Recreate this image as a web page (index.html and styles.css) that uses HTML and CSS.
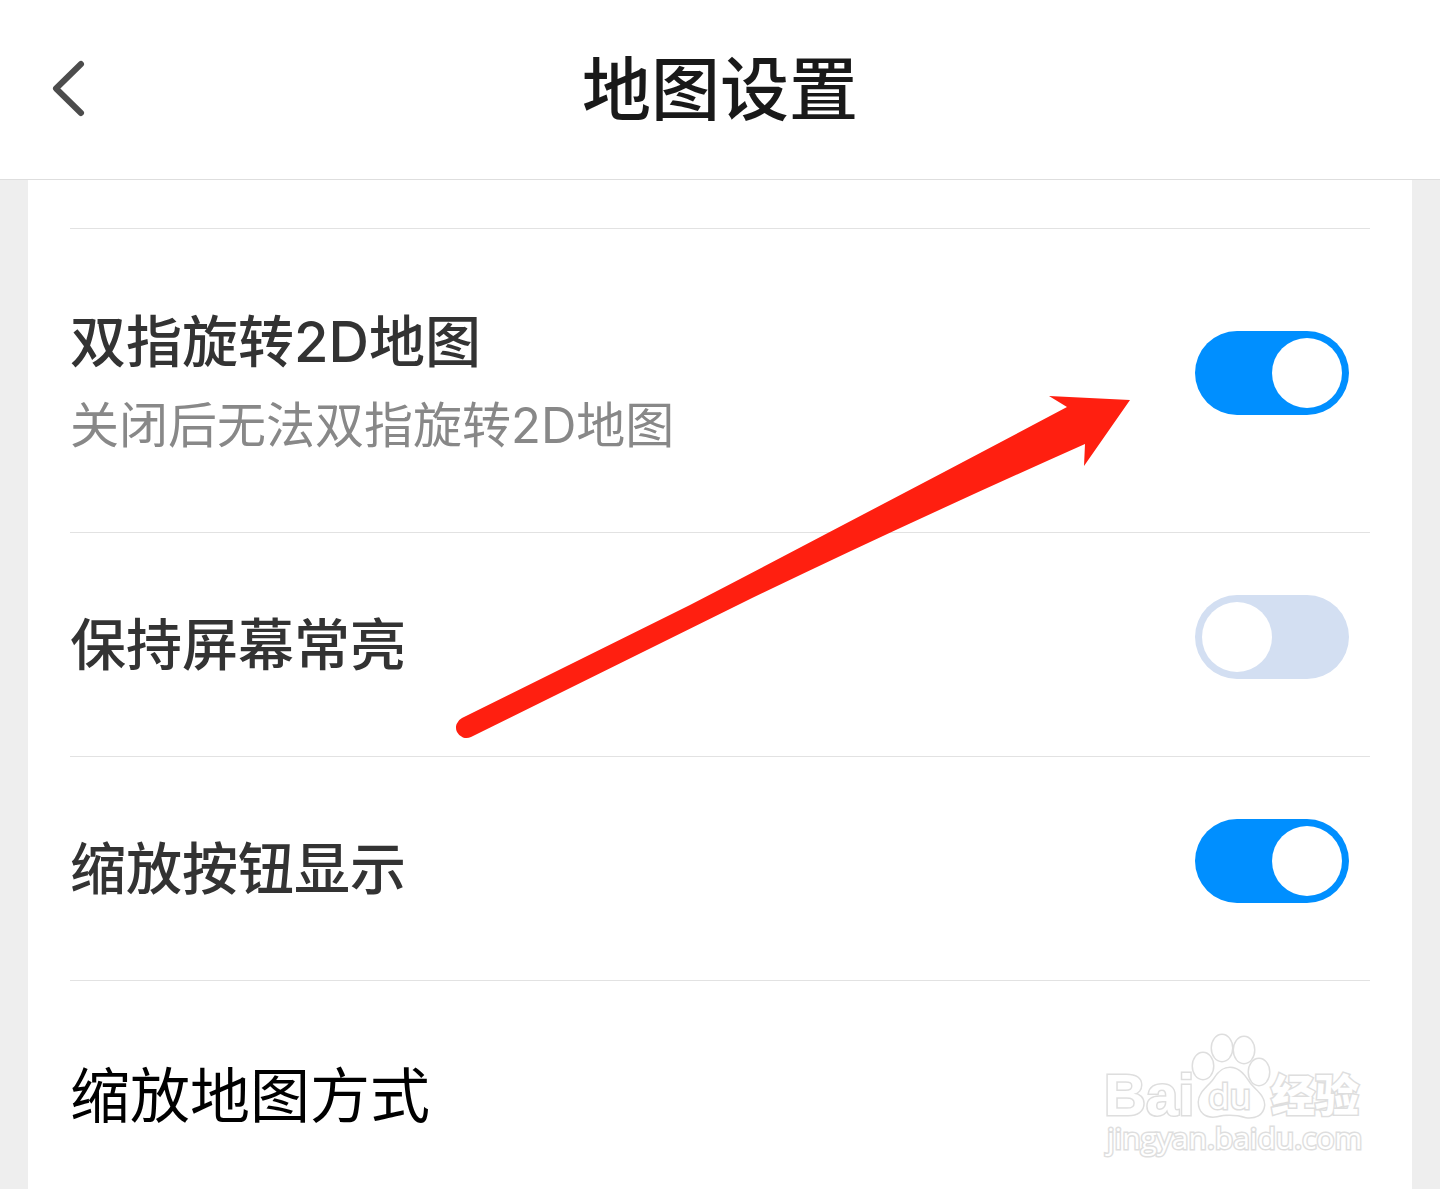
FILE: index.html
```html
<!DOCTYPE html>
<html lang="zh-CN">
    <head>
        <title>地图设置</title>
        <meta charset="UTF-8">
        <meta name="viewport" content="width=device-width,initial-scale=1.0">
        <link rel="stylesheet" href="styles.css">
    </head>
    <body>
        <div id="header">
            <button type="button" class="back" aria-label="返回">
                <svg width="40" height="64" viewBox="0 0 40 64">
                    <path d="M33 6L8 30.500L33 55" />
                </svg>
            </button>
            <h1 class="title">地图设置</h1>
        </div>
        <div id="container">
            <ul class="list">
                <li class="item item_tall">
                    <label class="text" for="rotate">
                        <span class="name">双指旋转2D地图</span>
                        <span class="desc">关闭后无法双指旋转2D地图</span>
                    </label>
                    <input type="checkbox" class="switch" id="rotate" checked>
                </li>
                <li class="item">
                    <label class="text" for="screen">
                        <span class="name">保持屏幕常亮</span>
                    </label>
                    <input type="checkbox" class="switch" id="screen">
                </li>
                <li class="item">
                    <label class="text" for="zoombtn">
                        <span class="name">缩放按钮显示</span>
                    </label>
                    <input type="checkbox" class="switch" id="zoombtn" checked>
                </li>
                <li class="item">
                    <span class="text mode">缩放地图方式</span>
                </li>
            </ul>
            <!-- 箭头标注 -->
            <svg class="arrow" width="680" height="350" viewBox="453 392 680 350">
                <path d="M462 718L690 605Q880 506 1067 407L1049 396L1130 400L1084 466L1085 444Q890 531 740 604L471 737A10.500 10.500 0 0 1 462 718Z" />
            </svg>
            <!-- 水印 -->
            <svg class="mark" width="270" height="140" viewBox="1100 1030 270 140">
                <text class="mark_logo" x="1104" y="1115">Bai</text>
                <ellipse cx="1203" cy="1066" rx="10" ry="13" />
                <ellipse cx="1222" cy="1048" rx="10" ry="13" />
                <ellipse cx="1244" cy="1050" rx="10" ry="13" />
                <ellipse cx="1259" cy="1072" rx="10" ry="13" />
                <path d="M1230 1068C1240 1068 1245 1077 1250 1084C1256 1091 1264 1096 1264 1105C1263 1115 1255 1118 1246 1117C1236 1114 1226 1114 1217 1116C1206 1118 1199 1112 1199 1102C1199 1092 1210 1086 1215 1078C1219 1072 1223 1068 1230 1068Z" />
                <text class="mark_du" x="1208" y="1109">du</text>
                <text class="mark_cn" x="1271" y="1112">经验</text>
                <text class="mark_url" x="1107" y="1149">jingyan.baidu.com</text>
            </svg>
        </div>
    </body>
</html>
```

FILE: styles.css
```css
html, body {
    margin: 0;
    padding: 0;
    background-color: #eee;
    font-family: "Inter", "Noto Sans CJK SC", sans-serif;
}
body {
    display: flex;
    flex-direction: column;
    min-height: 100vh;
    overflow-x: hidden;
}
#header {
    display: grid;
    grid-template-columns: 96px 1fr 96px;
    align-items: center;
    height: 179px;
    background-color: #fff;
    border-bottom: 1px solid #dedede;
}
.back {
    margin: 0 0 0 48px;
    padding: 0;
    border: 0;
    width: 40px;
    height: 64px;
    background: none;
    cursor: pointer;
}
.back path {
    fill: none;
    stroke: #4c4c4c;
    stroke-width: 6;
    stroke-linecap: round;
    stroke-linejoin: round;
}
.title {
    margin: 0;
    font-size: 69px;
    line-height: 84px;
    font-weight: 500;
    text-align: center;
    color: #191919;
}
#container {
    position: relative;
    flex: 1 0 0;
    box-sizing: border-box;
    margin: 0 28px;
    padding: 48px 42px 0;
    background-color: #fff;
}
.list {
    margin: 0;
    padding: 0;
    list-style: none;
}
.item {
    display: flex;
    align-items: center;
    justify-content: space-between;
    height: 223px;
    border-top: 1px solid #e2e2e2;
}
.item_tall {
    height: 303px;
}
/* 最后一行不撑开页面 */
.item:last-child {
    height: 208px;
}
.item_tall .text {
    padding-top: 10px;
}
.name, .desc {
    display: block;
}
.name {
    font-size: 56px;
    line-height: 80px;
    font-weight: 500;
    color: #333;
}
.desc {
    font-size: 49px;
    line-height: 88px;
    color: #888;
}
.mode {
    padding-top: 22px;
    font-size: 60px;
    line-height: 80px;
    color: #000;
}
.switch {
    appearance: none;
    display: flex;
    box-sizing: border-box;
    margin: 0 21px 16px 0;
    padding: 7px;
    width: 154px;
    height: 84px;
    border-radius: 42px;
    background-color: #d3dff2;
    cursor: pointer;
}
.switch::before {
    content: "";
    width: 70px;
    height: 70px;
    border-radius: 50%;
    background-color: #fff;
}
.switch:checked {
    justify-content: flex-end;
    background-color: #008fff;
}
.arrow {
    position: absolute;
    left: 425px;
    top: 212px;
    fill: #ff1f10;
    pointer-events: none;
}
.mark {
    position: absolute;
    right: 42px;
    top: 850px;
    fill: #fff;
    stroke: #dedede;
    stroke-width: 3;
    paint-order: stroke;
    pointer-events: none;
}
.mark_logo {
    font: bold 58px "Liberation Sans", sans-serif;
}
.mark_du {
    font: 35px "Noto Sans", sans-serif;
}
.mark_cn {
    font: 900 44px "Noto Sans CJK SC", sans-serif;
}
.mark_url {
    font: 30px "Open Sans", sans-serif;
}
```
